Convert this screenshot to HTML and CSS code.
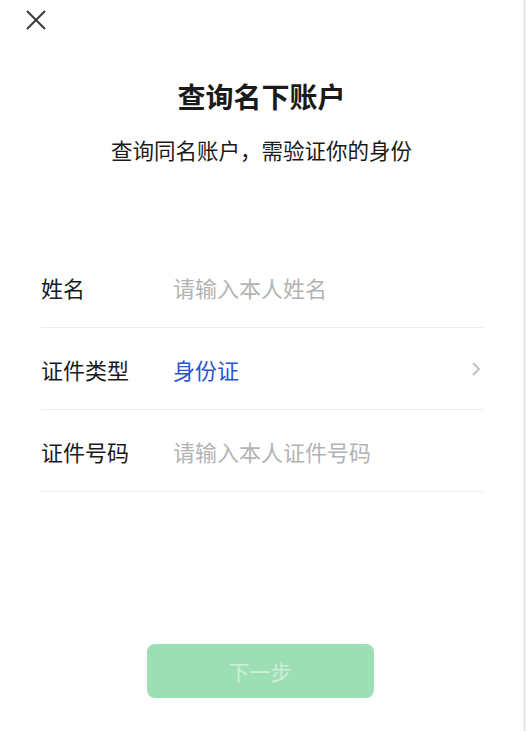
FILE: index.html
```html
<!DOCTYPE html>
<html lang="zh-CN">
<head>
    <meta charset="UTF-8">
    <meta name="viewport" content="width=device-width, initial-scale=1.0">
    <title>查询名下账户</title>
    <link rel="stylesheet" href="styles.css">
</head>
<body>
    <div class="page">
        <div class="topbar">
            <button class="close" aria-label="关闭">
                <svg width="20" height="20" viewBox="0 0 20 20">
                    <path d="M1 1 L19 19 M19 1 L1 19" stroke="#333" stroke-width="1.8" fill="none"/>
                </svg>
            </button>
        </div>

        <h1 class="title">查询名下账户</h1>
        <p class="subtitle">查询同名账户，需验证你的身份</p>

        <div class="form">
            <div class="row">
                <span class="label">姓名</span>
                <span class="value placeholder">请输入本人姓名</span>
            </div>
            <div class="row">
                <span class="label">证件类型</span>
                <span class="value select">身份证</span>
                <svg class="arrow" width="10" height="16" viewBox="0 0 10 16">
                    <path d="M2 2 L8 8 L2 14" stroke="#c4c4c4" stroke-width="2.2" fill="none"/>
                </svg>
            </div>
            <div class="row">
                <span class="label">证件号码</span>
                <span class="value placeholder">请输入本人证件号码</span>
            </div>
        </div>

        <div class="footer">
            <button class="next" disabled>下一步</button>
        </div>
    </div>
</body>
</html>
```

FILE: styles.css
```css
html, body {
    margin: 0;
    padding: 0;
    height: 100%;
}

body {
    background-color: white;
    font-family: "Noto Sans CJK SC", "Liberation Sans", sans-serif;
    color: #1a1a1a;
}

.page {
    height: 731px;
    box-sizing: border-box;
    border-right: 3px solid #ececec;
    display: flex;
    flex-direction: column;
}

.topbar {
    height: 40px;
    padding-left: 26px;
    padding-top: 10px;
    box-sizing: border-box;
}

.close {
    border: none;
    background: none;
    padding: 0;
    width: 20px;
    height: 20px;
    cursor: pointer;
}

.title {
    margin: 38px 0 0;
    text-align: center;
    font-size: 28px;
    font-weight: bold;
    line-height: 36px;
    color: #1a1a1a;
}

.subtitle {
    margin: 21px 0 0;
    text-align: center;
    font-size: 21.5px;
    line-height: 30px;
    color: #1a1a1a;
}

.form {
    margin: 81px 40px 0 41px;
}

.row {
    display: flex;
    align-items: center;
    height: 82px;
    border-bottom: 1px solid #ededed;
    font-size: 22px;
    box-sizing: border-box;
}

.label {
    width: 132px;
    flex-shrink: 0;
    color: #1a1a1a;
}

.value {
    flex: 1;
}

.placeholder {
    color: #b3b3b3;
}

.select {
    color: #2a54d0;
}

.arrow {
    margin-right: 2px;
}

.footer {
    display: flex;
    justify-content: center;
    margin-top: 152px;
    padding-right: 3px;
}

.next {
    width: 227px;
    height: 54px;
    border: none;
    border-radius: 8px;
    background-color: #9ddfb4;
    color: #cdeed9;
    font-family: inherit;
    font-size: 21px;
}
```
